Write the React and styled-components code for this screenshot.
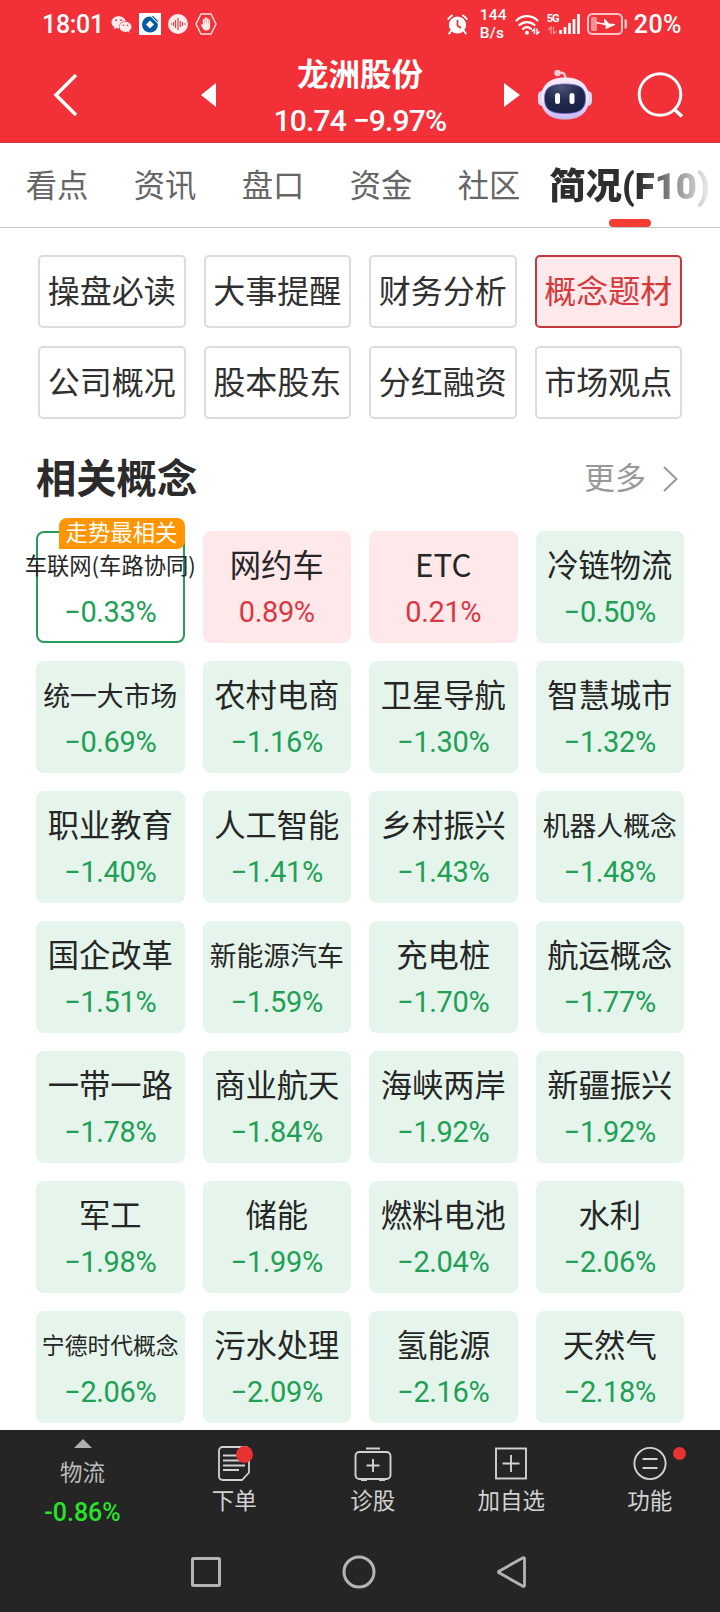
import React from "react"
import styled, { createGlobalStyle, css } from "styled-components"
import { FaWeixin } from "react-icons/fa"

const subTabs = [
  { name: "操盘必读" },
  { name: "大事提醒" },
  { name: "财务分析" },
  { name: "概念题材", active: true },
  { name: "公司概况" },
  { name: "股本股东" },
  { name: "分红融资" },
  { name: "市场观点" },
]

const tabs = ["看点", "资讯", "盘口", "资金", "社区"]

const concepts = [
  { name: "车联网(车路协同)", value: "−0.33%", tag: "走势最相关" },
  { name: "网约车", value: "0.89%" },
  { name: "ETC", value: "0.21%" },
  { name: "冷链物流", value: "−0.50%" },
  { name: "统一大市场", value: "−0.69%" },
  { name: "农村电商", value: "−1.16%" },
  { name: "卫星导航", value: "−1.30%" },
  { name: "智慧城市", value: "−1.32%" },
  { name: "职业教育", value: "−1.40%" },
  { name: "人工智能", value: "−1.41%" },
  { name: "乡村振兴", value: "−1.43%" },
  { name: "机器人概念", value: "−1.48%" },
  { name: "国企改革", value: "−1.51%" },
  { name: "新能源汽车", value: "−1.59%" },
  { name: "充电桩", value: "−1.70%" },
  { name: "航运概念", value: "−1.77%" },
  { name: "一带一路", value: "−1.78%" },
  { name: "商业航天", value: "−1.84%" },
  { name: "海峡两岸", value: "−1.92%" },
  { name: "新疆振兴", value: "−1.92%" },
  { name: "军工", value: "−1.98%" },
  { name: "储能", value: "−1.99%" },
  { name: "燃料电池", value: "−2.04%" },
  { name: "水利", value: "−2.06%" },
  { name: "宁德时代概念", value: "−2.06%" },
  { name: "污水处理", value: "−2.09%" },
  { name: "氢能源", value: "−2.16%" },
  { name: "天然气", value: "−2.18%" },
]

// long names shrink so they fit the card
const nameSize = (name) => {
  if (name.length > 6) return 22.3
  if (name.length === 6) return 22.8
  if (name.length === 5) return 26.8
  return 31.3
}

const GlobalStyle = createGlobalStyle`
  * {
    box-sizing: border-box;
  }
  body {
    margin: 0;
    background: #fff;
    font-family: Roboto, "Noto Sans CJK SC", sans-serif;
  }
  svg {
    display: block;
    flex: none;
  }
`

const Page = styled.div`
  display: flex;
  flex-direction: column;
  width: 720px;
  height: 1612px;
  overflow: hidden;
  background: #fff;
`

const Header = styled.header`
  height: 143px;
  background: #f23038;
  color: #fff;
  border-bottom: 1px solid #d93a42;
`

const StatusBar = styled.div`
  display: flex;
  align-items: center;
  justify-content: space-between;
  height: 48px;
  padding: 0 38px 0 42px;
`

const StatusGroup = styled.div`
  display: flex;
  align-items: center;
  gap: ${({ gap }) => gap}px;
`

const StatusText = styled.span`
  font-size: 25px;
  font-weight: 500;
  line-height: 30px;
  letter-spacing: ${({ spacing }) => spacing || 0}px;
  padding-top: 2px;
`

const NetSpeed = styled.div`
  width: 28px;
  margin: 0 1px 0 6px;
  font-size: 15.5px;
  font-weight: 500;
  line-height: 18px;
  letter-spacing: 0.2px;
  white-space: nowrap;
`

const Signal = styled.div`
  display: flex;
  width: 34px;
  height: 22px;
`

const SignalLabel = styled.div`
  width: 12px;
  font-size: 11px;
  font-weight: 700;
  line-height: 12px;
  letter-spacing: -1px;
  svg {
    margin-top: 1px;
  }
`

const TitleBar = styled.div`
  display: flex;
  align-items: center;
  height: 94px;
  padding: 0 36px 0 52px;
`

const StockTitle = styled.div`
  flex: 1;
  text-align: center;
  margin: 0 56px 0 56px;
  padding-top: 5px;
  white-space: nowrap;
`

const StockName = styled.div`
  font-family: "Noto Sans CJK SC", sans-serif;
  font-size: 31.5px;
  font-weight: 700;
  line-height: 42px;
`

const StockPrice = styled.div`
  padding-top: 5px;
  font-size: 30px;
  font-weight: 500;
  line-height: 46px;
  letter-spacing: -0.8px;
`

const TabBar = styled.nav`
  display: flex;
  height: 85px;
  padding-left: 3px;
  border-bottom: 1px solid #c6c6c6;
`

const Tab = styled.div`
  width: 108px;
  text-align: center;
  font-family: "Noto Sans CJK SC", sans-serif;
  font-size: 31.3px;
  line-height: 82px;
  color: #666;
`

const ActiveTab = styled.div`
  display: flex;
  flex-direction: column;
  align-items: center;
  width: 167px;
  margin-left: 3px;
  span {
    height: 76px;
    line-height: 88px;
    font-family: Roboto, "Noto Sans CJK SC", sans-serif;
    font-size: 36.4px;
    font-weight: 900;
    white-space: nowrap;
    color: transparent;
    background: linear-gradient(to right, #2e2e2e 56%, #eee 100%);
    background-clip: text;
    -webkit-background-clip: text;
  }
  &::after {
    content: "";
    width: 42px;
    height: 8px;
    border-radius: 4px;
    background: #f53d35;
  }
`

const SubTabs = styled.div`
  display: grid;
  grid-template-columns: repeat(4, 1fr);
  grid-auto-rows: 73px;
  gap: 18px;
  padding: 27px 38px 0;
`

const SubTab = styled.div`
  border: 2px solid #dcdcdc;
  border-radius: 5px;
  text-align: center;
  white-space: nowrap;
  font-family: "Noto Sans CJK SC", sans-serif;
  font-size: 32px;
  line-height: 64px;
  color: #303030;
  ${({ active }) =>
    active &&
    css`
      border-color: #c33a3e;
      background: #ffe9ea;
      color: #d6393c;
    `}
`

const SectionHead = styled.div`
  display: flex;
  align-items: center;
  justify-content: space-between;
  height: 112px;
  padding: 0 42px 0 36px;
  font-family: "Noto Sans CJK SC", sans-serif;
`

const SectionTitle = styled.h2`
  margin: 0;
  font-size: 40.3px;
  font-weight: 700;
  color: #2b2b2b;
`

const More = styled.div`
  display: flex;
  align-items: center;
  gap: 17px;
  font-size: 31px;
  color: #999;
  svg {
    margin-top: 8px;
  }
`

const Grid = styled.div`
  display: grid;
  grid-template-columns: repeat(4, 1fr);
  grid-auto-rows: 112px;
  gap: 18px;
  padding: 0 36px;
`

const Card = styled.div`
  position: relative;
  display: flex;
  flex-direction: column;
  align-items: center;
  min-width: 0;
  border-radius: 8px;
  background: ${({ up }) => (up ? "#ffe8ea" : "#e5f5eb")};
  color: ${({ up }) => (up ? "#d93843" : "#21a055")};
  ${({ tagged }) =>
    tagged &&
    css`
      background: #fff;
      box-shadow: inset 0 0 0 2px #289a5c;
    `}
`

const CardName = styled.div`
  height: 60px;
  line-height: ${({ size }) => (size < 30 ? 67 : 65)}px;
  font-family: "Noto Sans CJK SC", sans-serif;
  font-size: ${({ size }) => size}px;
  white-space: nowrap;
  color: #262626;
`

const CardValue = styled.div`
  font-size: 29px;
  line-height: 42px;
  letter-spacing: -0.4px;
`

const CardTag = styled.div`
  position: absolute;
  top: -13px;
  right: 0;
  width: 126px;
  height: 31px;
  border-radius: 8px 8px 8px 0;
  background: #ff9503;
  color: #fff;
  text-align: center;
  font-family: "Noto Sans CJK SC", sans-serif;
  font-size: 22.4px;
  line-height: 26px;
`

const Footer = styled.footer`
  height: 182px;
  margin-top: auto;
  background: #252525;
  color: #d2d2d2;
  flex: none;
  z-index: 1;
`

const Toolbar = styled.div`
  display: grid;
  grid-template-columns: 165px repeat(4, 138.5px);
  height: 100px;
`

const SectorItem = styled.div`
  display: flex;
  flex-direction: column;
  align-items: center;
  padding-top: 9px;
  font-family: "Noto Sans CJK SC", sans-serif;
  font-size: 22.5px;
  line-height: 46px;
  color: #bdbdbd;
`

const SectorValue = styled.div`
  font-family: Roboto, sans-serif;
  font-size: 25px;
  font-weight: 500;
  line-height: 38px;
  color: #2ae22c;
`

const ToolItem = styled.div`
  position: relative;
  display: flex;
  flex-direction: column;
  align-items: center;
  padding-top: 14px;
  font-family: "Noto Sans CJK SC", sans-serif;
  font-size: 22.5px;
  line-height: 35px;
`

const Dot = styled.i`
  position: absolute;
  top: ${({ top }) => top}px;
  left: ${({ left }) => left}px;
  width: ${({ size }) => size}px;
  height: ${({ size }) => size}px;
  border-radius: 50%;
  background: #e93232;
`

const SystemNav = styled.div`
  display: flex;
  justify-content: space-between;
  align-items: center;
  height: 84px;
  padding: 0 191px 0 189px;
`

const BankIcon = () => (
  <svg width="22" height="22" viewBox="0 0 22 22">
    <rect width="22" height="22" fill="#fff" />
    <circle cx="11" cy="11.5" r="8" fill="#075a9f" />
    <path d="M11 7.5l4 4-4 4-4-4z" fill="#fff" />
    <path d="M12 3l7 7M14.5 2.5l5.5 5.5" stroke="#fff" strokeWidth="1.2" />
    <path d="M13.4 3.2l5.4 5.4" stroke="#075a9f" strokeWidth="1.2" />
  </svg>
)

const VoiceIcon = () => (
  <svg width="20" height="20" viewBox="0 0 20 20">
    <circle cx="10" cy="10" r="10" fill="#ffecec" />
    <path
      d="M2.5 10h1.5M5.5 8v4M7.5 6v8M10 4v12M12.3 7v6M14.5 8v4M16 10h2"
      stroke="#d8454c"
      strokeWidth="1.2"
    />
  </svg>
)

const HandIcon = () => (
  <svg width="22" height="22" viewBox="0 0 22 22">
    <path d="M6 1h10l5 10-5 10H6L1 11z" fill="none" stroke="#ffdede" strokeWidth="1.5" />
    <path
      d="M5.8 10.5l2 1.6V6h1.6v4.5h.3V4.3h1.7v6h.3V5h1.6v5.5h.3V6.5h1.5v7c0 2.8-1.5 4-3.8 4-2.5 0-3.8-1.5-5.5-7z"
      fill="#ffecec"
    />
  </svg>
)

const AlarmIcon = () => (
  <svg width="21" height="21" viewBox="0 0 21 21">
    <circle cx="10.5" cy="11" r="8.6" fill="#fff" />
    <path
      d="M1.3 5a11 11 0 0 1 3.7-3.5M19.7 5a11 11 0 0 0-3.7-3.5M4 17l-1.8 2.5M17 17l1.8 2.5"
      stroke="#fff"
      strokeWidth="2"
      strokeLinecap="round"
      fill="none"
    />
    <path d="M10.5 6v5.5l3.5 2.5" stroke="#f23038" strokeWidth="1.8" fill="none" />
  </svg>
)

const WifiIcon = () => (
  <svg width="26" height="21" viewBox="0 0 26 21">
    <g fill="none" stroke="#fff" strokeWidth="2.2" strokeLinecap="round">
      <path d="M1.5 6.5a15 15 0 0 1 21 0" />
      <path d="M4.5 11a11 11 0 0 1 15 0" />
      <path d="M8 14.8a6.5 6.5 0 0 1 8 0" />
    </g>
    <circle cx="12" cy="18.7" r="2" fill="#fff" />
    <path d="M19.5 20v-5l-2.5 2.5M22 14.5v5.5l2.5-2.5" stroke="#fff" strokeWidth="1.4" fill="none" />
  </svg>
)

const BarsIcon = () => (
  <svg width="22" height="22" viewBox="0 0 22 22">
    <path d="M1.5 17v4M6 14v7M10.5 10v11M15 6v15M19.5 1v20" stroke="#fff" strokeWidth="2.7" />
  </svg>
)

const BatteryIcon = () => (
  <svg width="41" height="22" viewBox="0 0 41 22">
    <rect x="1" y="1" width="34" height="20" rx="4.5" fill="none" stroke="#ffc4c6" strokeWidth="2" />
    <rect x="4" y="4" width="6" height="14" rx="1.5" fill="#ff9095" />
    <path d="M37.5 6.5h1.5a1.5 1.5 0 0 1 1 1.5v6a1.5 1.5 0 0 1-1 1.5h-1.5z" fill="#ffc4c6" />
    <path d="M9 9.5l9 1.5-.5-5 4.500 5 6 .5-9 4 .3-3.500z" fill="#fff" stroke="#fff" />
  </svg>
)

const RobotIcon = () => (
  <svg width="54" height="52" viewBox="0 0 54 52">
    <defs>
      <linearGradient id="shell" x1="0" y1="0" x2="0" y2="1">
        <stop offset="0" stopColor="#f7eaf4" />
        <stop offset="0.55" stopColor="#ebe5ff" />
        <stop offset="1" stopColor="#c5b8ee" />
      </linearGradient>
      <radialGradient id="visor" cx="0.4" cy="0.1" r="0.8">
        <stop offset="0" stopColor="#4a5674" />
        <stop offset="0.6" stopColor="#202a4c" />
        <stop offset="1" stopColor="#1b2247" />
      </radialGradient>
    </defs>
    <path d="M20 4c6-1 7.5 1 7.5 6" fill="none" stroke="#f5bfd0" strokeWidth="2.5" />
    <circle cx="19.5" cy="4" r="3.2" fill="#f9cbd8" />
    <rect x="0" y="22" width="9" height="15" rx="4.5" fill="#dcd2f5" />
    <rect x="45" y="22" width="9" height="15" rx="4.5" fill="#dcd2f5" />
    <path
      d="M27 8.5c15 0 24 7 24 21S42 50.5 27 50.5 3 43.5 3 29.5s9-21 24-21z"
      fill="url(#shell)"
    />
    <path
      d="M27 15c15 0 20.5 4 20.5 14.5S42 44.5 27 44.5 6.5 40 6.5 29.5 12 15 27 15z"
      fill="url(#visor)"
      stroke="#7d62d8"
      strokeWidth="0.8"
    />
    <rect x="17" y="24" width="5" height="11" rx="2.5" fill="#fff" />
    <rect x="31.5" y="24" width="5" height="11" rx="2.5" fill="#fff" />
  </svg>
)

const OrderIcon = () => (
  <svg width="34" height="38" viewBox="0 0 34 38" fill="none" stroke="currentColor">
    <path
      d="M5.5 3h23a3.5 3.5 0 0 1 3.5 3.5v22l-7 7.5H5.5A3.5 3.5 0 0 1 2 32.5v-26A3.5 3.5 0 0 1 5.5 3z"
      strokeWidth="1.8"
    />
    <path d="M6 11.5h16M6 16.5h22M6 21.5h22M6 26h16" strokeWidth="1.8" />
  </svg>
)

const DiagnoseIcon = () => (
  <svg width="38" height="38" viewBox="0 0 38 38" fill="none" stroke="currentColor" strokeWidth="1.9">
    <rect x="1.5" y="8" width="35" height="27" rx="4" />
    <path d="M12 4.5h14M7 36h6M25 36h6M12.5 21.5h13M19 15v13" />
  </svg>
)

const AddIcon = () => (
  <svg width="32" height="38" viewBox="0 0 32 38" fill="none" stroke="currentColor" strokeWidth="1.9">
    <rect x="1" y="4.5" width="30" height="30" />
    <path d="M7.5 19.5h17M16 11v17" />
  </svg>
)

const MenuIcon = () => (
  <svg width="34" height="38" viewBox="0 0 34 38" fill="none" stroke="currentColor" strokeWidth="1.9">
    <circle cx="17" cy="19.5" r="15.6" />
    <path d="M9.5 15h15M9.5 24h15" />
  </svg>
)

const App = () => (
  <>
    <GlobalStyle />
    <Page>
      <Header>
        <StatusBar>
          <StatusGroup gap={7}>
            <StatusText spacing={-0.3}>18:01</StatusText>
            <FaWeixin size={21} color="#ffecec" />
            <BankIcon />
            <VoiceIcon />
            <HandIcon />
          </StatusGroup>
          <StatusGroup gap={6}>
            <AlarmIcon />
            <NetSpeed>
              144
              <br />
              B/s
            </NetSpeed>
            <WifiIcon />
            <Signal>
              <SignalLabel>
                5G
                <svg width="10" height="8" viewBox="0 0 10 8">
                  <path d="M4 8V1L1 4M6.5 1v7l3-3" stroke="#ff8f94" strokeWidth="1.3" fill="none" />
                </svg>
              </SignalLabel>
              <BarsIcon />
            </Signal>
            <BatteryIcon />
            <StatusText spacing={0.5}>20%</StatusText>
          </StatusGroup>
        </StatusBar>
        <TitleBar>
          <svg width="26" height="46" viewBox="0 0 26 46">
            <path d="M24 3L4 23l20 20" fill="none" stroke="#fff" strokeWidth="3.5" />
          </svg>
          <svg width="138" height="24" viewBox="0 0 138 24">
            <path d="M138 0v24l-15-12z" fill="#fff" />
          </svg>
          <StockTitle>
            <StockName>龙洲股份</StockName>
            <StockPrice>10.74 −9.97%</StockPrice>
          </StockTitle>
          <svg width="34" height="24" viewBox="0 0 34 24">
            <path d="M0 0l16 12L0 24z" fill="#fff" />
          </svg>
          <RobotIcon />
          <svg width="92" height="48" viewBox="0 0 92 48">
            <circle cx="68" cy="23.5" r="20.8" fill="none" stroke="#fff" strokeWidth="3" />
            <path d="M82 38l8 7.5" stroke="#fff" strokeWidth="3.5" />
          </svg>
        </TitleBar>
      </Header>

      <TabBar>
        {tabs.map((name) => (
          <Tab key={name}>{name}</Tab>
        ))}
        <ActiveTab>
          <span>简况(F10)</span>
        </ActiveTab>
      </TabBar>

      <SubTabs>
        {subTabs.map(({ name, active }) => (
          <SubTab key={name} active={active}>
            {name}
          </SubTab>
        ))}
      </SubTabs>

      <SectionHead>
        <SectionTitle>相关概念</SectionTitle>
        <More>
          更多
          <svg width="15" height="28" viewBox="0 0 15 28">
            <path d="M1 2l12.5 12L1 26" fill="none" stroke="#999" strokeWidth="2" />
          </svg>
        </More>
      </SectionHead>

      <Grid>
        {concepts.map(({ name, value, tag }) => (
          <Card key={name} up={!value.startsWith("−")} tagged={!!tag}>
            {tag && <CardTag>{tag}</CardTag>}
            <CardName size={nameSize(name)}>{name}</CardName>
            <CardValue>{value}</CardValue>
          </Card>
        ))}
      </Grid>

      <Footer>
        <Toolbar>
          <SectorItem>
            <svg width="18" height="9" viewBox="0 0 18 9">
              <path d="M9 0l9 9H0z" fill="#b0b0b0" />
            </svg>
            物流
            <SectorValue>-0.86%</SectorValue>
          </SectorItem>
          <ToolItem>
            <OrderIcon />
            下单
            <Dot top={16} left={71} size={17} />
          </ToolItem>
          <ToolItem>
            <DiagnoseIcon />
            诊股
          </ToolItem>
          <ToolItem>
            <AddIcon />
            加自选
          </ToolItem>
          <ToolItem>
            <MenuIcon />
            功能
            <Dot top={17} left={92} size={13} />
          </ToolItem>
        </Toolbar>
        <SystemNav>
          <svg width="34" height="34" viewBox="0 0 34 34">
            <rect x="3.5" y="3.5" width="27" height="27" rx="1" fill="none" stroke="#b4b4b4" strokeWidth="3" />
          </svg>
          <svg width="34" height="34" viewBox="0 0 34 34">
            <circle cx="17" cy="17" r="15" fill="none" stroke="#b4b4b4" strokeWidth="3" />
          </svg>
          <svg width="34" height="34" viewBox="0 0 34 34">
            <path
              d="M29.5 3.5v27a1 1 0 0 1-1.5.8L4.5 18a1 1 0 0 1 0-2L28 2.7a1 1 0 0 1 1.5.8z"
              fill="none"
              stroke="#b4b4b4"
              strokeWidth="2.8"
            />
          </svg>
        </SystemNav>
      </Footer>
    </Page>
  </>
)

export default App
